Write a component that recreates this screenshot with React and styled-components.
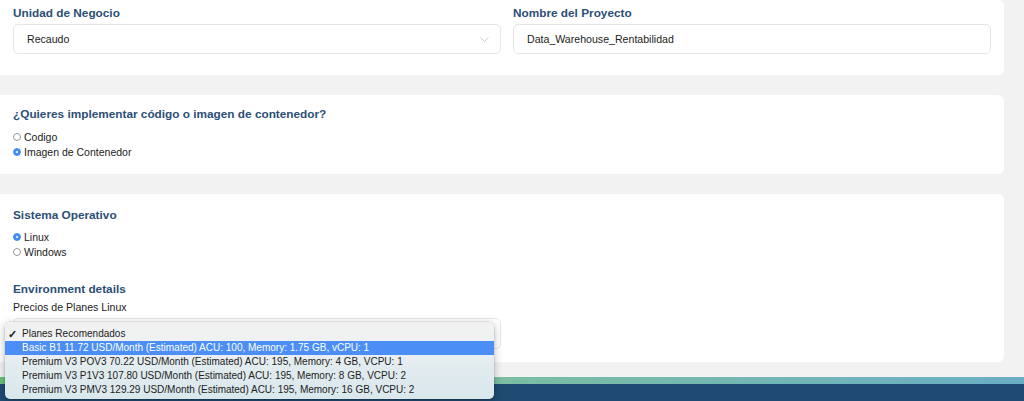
import React from 'react';
import styled, { createGlobalStyle } from 'styled-components';

const GlobalStyle = createGlobalStyle`
  html, body {
    margin: 0;
    padding: 0;
    background: #f2f2f2;
    font-family: "Liberation Sans", Arial, sans-serif;
    color: #222;
  }
`;

const Page = styled.div`
  position: relative;
  height: 401px;
  overflow: hidden;
  display: flex;
  flex-direction: column;
`;

const Content = styled.div`
  display: flex;
  flex-direction: column;
  gap: 20px;
  width: 1004px;
`;

const Card = styled.section`
  background: #fff;
  border-radius: 0 6px 6px 0;
  padding: ${(p) => p.$pad || '13px 13px 12px'};
`;

const Grid = styled.div`
  display: grid;
  grid-template-columns: 488px 1fr;
  column-gap: 12px;
`;

const Heading = styled.h3`
  margin: ${(p) => p.$mt || '0'} 0 0;
  font-size: 11.8px;
  line-height: 16px;
  font-weight: bold;
  color: #2b4e76;
`;

const Field = styled.div`
  position: relative;
  margin-top: ${(p) => p.$mt || '3px'};
  width: ${(p) => p.$w || 'auto'};
  height: ${(p) => p.$h || '30px'};
  box-sizing: border-box;
  border: 1px solid #e6e6e6;
  border-radius: 5px;
  padding: 0 13px;
  display: flex;
  align-items: center;
  font-size: 10.6px;
  color: #222;
`;

const Chevron = styled.svg`
  position: absolute;
  right: 11px;
  top: 50%;
  margin-top: -2px;
`;

const Options = styled.div`
  margin-top: ${(p) => p.$mt || '7px'};
  display: flex;
  flex-direction: column;
`;

const Option = styled.label`
  display: flex;
  align-items: center;
  gap: 3px;
  height: 15.5px;
  font-size: 10.5px;
  color: #222;
`;

const Radio = styled.span`
  width: 8px;
  height: 8px;
  border-radius: 50%;
  box-sizing: border-box;
  border: 1px solid ${(p) => (p.$on ? '#3b86f0' : '#9a9a9a')};
  background: ${(p) =>
    p.$on ? 'radial-gradient(circle, #cfe2ff 0 0.8px, #4a90f5 1.3px)' : '#fff'};
`;

const SubLabel = styled.div`
  margin-top: 3px;
  font-size: 10.6px;
  line-height: 15px;
  color: #222;
`;

const Footer = styled.footer`
  margin-top: auto;
  height: 17px;
  background: #1f4b72;
  border-top: 7px solid transparent;
  border-image: linear-gradient(90deg, #6cc27b, #7dbfa0 45%, #6aaec6) 1;
  border-image-slice: 1;
  border-image-width: 7px 0 0 0;
`;

const Menu = styled.ul`
  position: absolute;
  left: 5px;
  top: 322px;
  width: 489px;
  margin: 0;
  padding: 5px 0 2px;
  list-style: none;
  box-sizing: border-box;
  border-radius: 5px;
  background: linear-gradient(#f1f1f1 0%, #eef1f2 30%, #e3ecef 55%, #d9e7ec 100%);
  box-shadow: 0 2px 8px rgba(0, 0, 0, 0.28), 0 0 0 0.5px rgba(0, 0, 0, 0.12);
`;

const MenuItem = styled.li`
  position: relative;
  height: 14px;
  line-height: 14px;
  padding-left: 17px;
  font-size: 10px;
  color: ${(p) => (p.$active ? '#fff' : '#222')};
  background: ${(p) => (p.$active ? '#4b8ef5' : 'transparent')};
  white-space: nowrap;
`;

const Check = styled.span`
  position: absolute;
  left: 3px;
  top: 0;
  font-size: 11px;
  font-weight: bold;
`;

const plans = [
  'Basic B1 11.72 USD/Month (Estimated) ACU: 100, Memory: 1.75 GB, vCPU: 1',
  'Premium V3 POV3 70.22 USD/Month (Estimated) ACU: 195, Memory: 4 GB, VCPU: 1',
  'Premium V3 P1V3 107.80 USD/Month (Estimated) ACU: 195, Memory: 8 GB, VCPU: 2',
  'Premium V3 PMV3 129.29 USD/Month (Estimated) ACU: 195, Memory: 16 GB, VCPU: 2',
];

export default function App() {
  return (
    <Page>
      <GlobalStyle />
      <Content>
        <Card $pad="5px 13px 21px">
          <Grid>
            <div>
              <Heading>Unidad de Negocio</Heading>
              <Field>
                Recaudo
                <Chevron width="9" height="5" viewBox="0 0 9 5">
                  <path d="M0.5 0.5 L4.5 4.5 L8.5 0.5" fill="none" stroke="#cfcfcf" strokeWidth="1" />
                </Chevron>
              </Field>
            </div>
            <div>
              <Heading>Nombre del Proyecto</Heading>
              <Field>Data_Warehouse_Rentabilidad</Field>
            </div>
          </Grid>
        </Card>

        <Card $pad="11px 13px 14px">
          <Heading>¿Quieres implementar código o imagen de contenedor?</Heading>
          <Options>
            <Option><Radio />Codigo</Option>
            <Option><Radio $on />Imagen de Contenedor</Option>
          </Options>
        </Card>

        <Card $pad="13px 13px 13px">
          <Heading>Sistema Operativo</Heading>
          <Options $mt="6px">
            <Option><Radio $on />Linux</Option>
            <Option><Radio />Windows</Option>
          </Options>
          <Heading $mt="21px">Environment details</Heading>
          <SubLabel>Precios de Planes Linux</SubLabel>
          <Field $w="488px" $h="31px" />
        </Card>
      </Content>

      <Footer />

      <Menu>
        <MenuItem>
          <Check>✓</Check>Planes Recomendados
        </MenuItem>
        {plans.map((p, i) => (
          <MenuItem key={p} $active={i === 0}>
            {p}
          </MenuItem>
        ))}
      </Menu>
    </Page>
  );
}
